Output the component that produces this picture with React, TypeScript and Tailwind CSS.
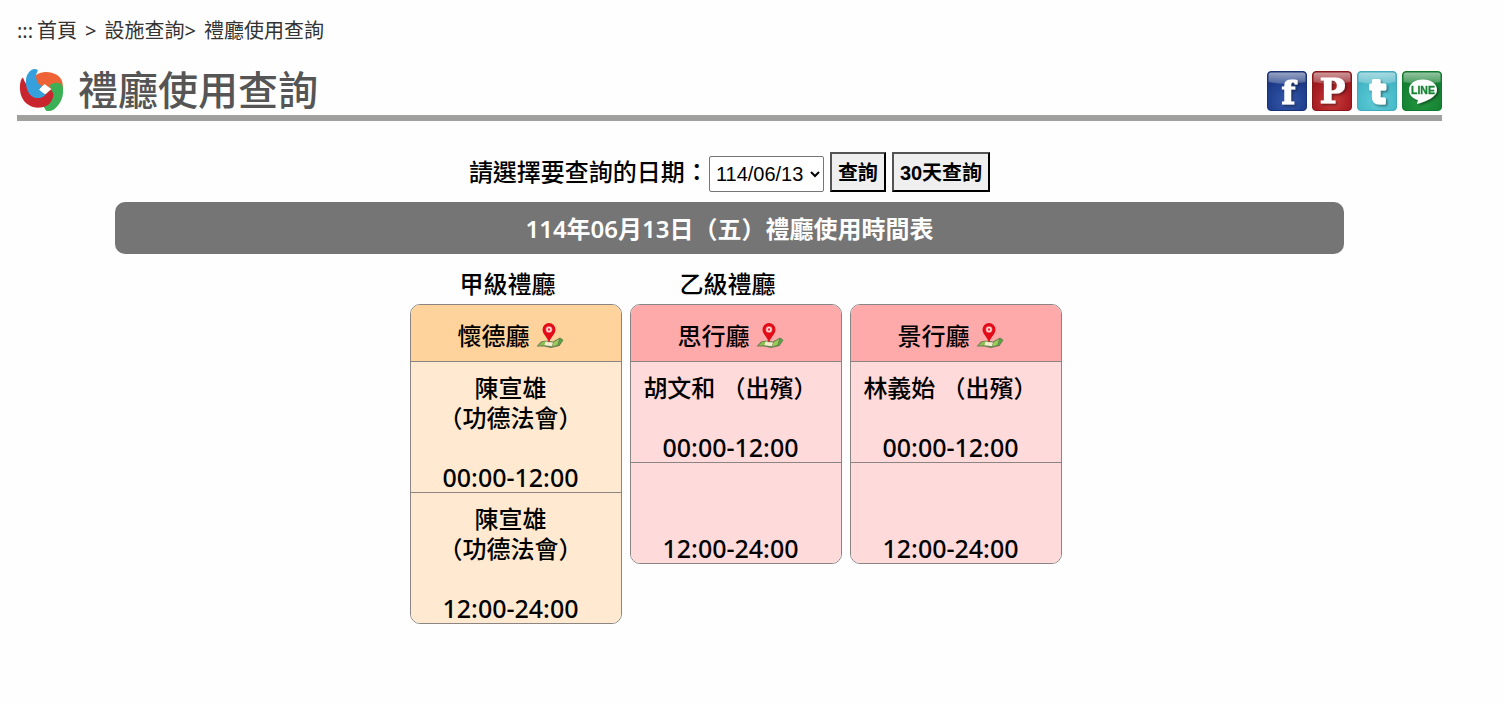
import React from "react";

type Slot = { lines: string[]; time: string };
type Hall = { grade: string; name: string; tone: "amber" | "rose"; slots: Slot[] };

const halls: Hall[] = [
  {
    grade: "甲級禮廳",
    name: "懷德廳",
    tone: "amber",
    slots: [
      { lines: ["陳宣雄", "（功德法會）"], time: "00:00-12:00" },
      { lines: ["陳宣雄", "（功德法會）"], time: "12:00-24:00" },
    ],
  },
  {
    grade: "乙級禮廳",
    name: "思行廳",
    tone: "rose",
    slots: [
      { lines: ["胡文和 （出殯）"], time: "00:00-12:00" },
      { lines: [""], time: "12:00-24:00" },
    ],
  },
  {
    grade: "",
    name: "景行廳",
    tone: "rose",
    slots: [
      { lines: ["林義始 （出殯）"], time: "00:00-12:00" },
      { lines: [""], time: "12:00-24:00" },
    ],
  },
];

const tones = {
  amber: { head: "bg-[#ffd39b]", body: "bg-[#ffead1]" },
  rose: { head: "bg-[#ffaaaa]", body: "bg-[#ffdada]" },
};

function Logo() {
  return (
    <svg viewBox="26 20 136 132" className="h-11 w-[45px] shrink-0" aria-hidden="true">
      <path d="M76 42C90 28 122 28 140 40C154 49 160 62 158 82L124 84L102 70L86 84C78 70 74 56 76 42Z" fill="#ee6236" />
      <path d="M118 72C132 60 152 62 158 74C162 100 156 118 144 132C136 144 124 152 108 149L100 136L110 116L106 98L124 84Z" fill="#3cb054" />
      <path d="M38 48C28 54 26 84 33 104C42 128 66 142 92 139C114 136 129 122 130 98L123 84L106 99L84 92C64 90 48 76 38 48Z" fill="#c9252f" />
      <path d="M82 25C66 16 48 34 47 58C46 84 58 106 76 110C88 112 100 108 106 100L87 85L95 75C82 68 76 54 78 40C79 34 84 30 82 25Z" fill="#35a0dc" />
      <path d="M103 68L123 83L106 99L88 85Z" fill="#fefefe" />
    </svg>
  );
}

function MapPin() {
  return (
    <svg viewBox="0 0 28 28" className="size-7" aria-hidden="true">
      <path d="M0.500 24.500L5 19.500L11 18.500L17 19.500L24 15.500L27.500 18L23.500 24L15 26L8 24.500Z" fill="#6b7d52" />
      <path d="M2.500 23.700L5.700 20.200L11 19.200L10 23.300L7 23.300Z" fill="#8cc152" />
      <path d="M9.500 19.600L17 20.500L16 24.300L8.500 23.300Z" fill="#f2efcf" />
      <path d="M17.500 20.500L23 17L21.500 22.800L16.500 24.500Z" fill="#9ccc55" />
      <path d="M24 16.600L26.600 18.200L23 23L22 23Z" fill="#55a545" />
      <path d="M13 21C12 15.500 6.500 12.500 6.500 7.500A6.500 6.500 0 0 1 19.500 7.500C19.500 12.500 14 15.500 13 21Z" fill="#e30b17" />
      <circle cx="13" cy="7.500" r="3.300" fill="#f58d8d" />
      <circle cx="13" cy="7.500" r="2.500" fill="#ffe3df" />
      <circle cx="13" cy="7.500" r="1.200" fill="#e3303a" />
    </svg>
  );
}

function Tile({ id, light, mid, dark, children }: { id: string; light: string; mid: string; dark: string; children: React.ReactNode }) {
  return (
    <svg viewBox="0 0 40 40" className="size-10" aria-hidden="true">
      <defs>
        <radialGradient id={id} cx="0.5" cy="0.75" r="0.8">
          <stop offset="0" stopColor={light} />
          <stop offset="0.6" stopColor={mid} />
          <stop offset="1" stopColor={dark} />
        </radialGradient>
        <linearGradient id={id + "-gloss"} x1="0" y1="0" x2="0" y2="1">
          <stop offset="0" stopColor="#fff" stopOpacity="0.55" />
          <stop offset="1" stopColor="#fff" stopOpacity="0.2" />
        </linearGradient>
        <filter id={id + "-shadow"} x="-30%" y="-30%" width="160%" height="160%">
          <feDropShadow dx="1.500" dy="1.500" stdDeviation="1.200" floodColor="#000" floodOpacity="0.45" />
        </filter>
      </defs>
      <rect x="0.500" y="0.500" width="39" height="39" rx="3.500" fill={"url(#" + id + ")"} stroke={dark} />
      <path d="M1.500 11V4Q1.500 1.500 4 1.500H36Q38.500 1.500 38.500 4V11Q20 15 1.500 11Z" fill={"url(#" + id + "-gloss)"} />
      <g filter={"url(#" + id + "-shadow)"}>{children}</g>
    </svg>
  );
}

function SocialLinks() {
  return (
    <div className="flex gap-[5px] pb-1">
      <a href="#facebook" aria-label="Facebook">
        <Tile id="fb" light="#3657a8" mid="#20408f" dark="#183274">
          <text x="21.500" y="33" textAnchor="middle" fontFamily="DejaVu Serif" fontWeight="700" fontSize="32" fill="#fff" stroke="#fff" strokeWidth="1.200">f</text>
        </Tile>
      </a>
      <a href="#plurk" aria-label="Plurk">
        <Tile id="plurk" light="#cc3b3b" mid="#a71d22" dark="#8a161b">
          <text x="20.500" y="32" textAnchor="middle" fontFamily="DejaVu Serif" fontWeight="700" fontSize="34" fill="#fff" stroke="#fff" strokeWidth="1.200">P</text>
        </Tile>
      </a>
      <a href="#twitter" aria-label="Twitter">
        <Tile id="tw" light="#62ccd8" mid="#48bac9" dark="#3fabbc">
          <text x="21" y="32" textAnchor="middle" fontFamily="DejaVu Sans" fontWeight="700" fontSize="32" fill="#fff" stroke="#fff" strokeWidth="3" strokeLinejoin="round">t</text>
        </Tile>
      </a>
      <a href="#line" aria-label="LINE">
        <Tile id="line" light="#25983f" mid="#168334" dark="#0f7a2d">
          <path d="M21 8.500C12.500 8.500 7 13 7 19C7 24.500 11.500 28 16 29L15 33C24 30.500 35 26 35 19C35 13 29 8.500 21 8.500Z" fill="#fff" />
          <text x="21" y="23.300" textAnchor="middle" fontFamily="Liberation Sans" fontWeight="700" fontSize="10.500" fill="#168334" stroke="#168334" strokeWidth="0.300">LINE</text>
        </Tile>
      </a>
    </div>
  );
}

function HallCard({ hall }: { hall: Hall }) {
  const tone = tones[hall.tone];
  return (
    <section className="w-[212px] text-center">
      <h3 className="h-[38px] pr-4 leading-9">{hall.grade}</h3>
      <div className="overflow-hidden rounded-[10px] border border-[#8a8583]">
        <div className={"flex h-14 items-center justify-center gap-1.5 pt-1.5 pr-2.5 " + tone.head}>
          <h4>{hall.name}</h4>
          <a href="#map" aria-label={hall.name}>
            <MapPin />
          </a>
        </div>
        <ul>
          {hall.slots.map((slot) => (
            <li key={slot.time} className={"border-t border-[#8a8583] pt-[11px] pr-2.5 leading-[30px] " + tone.body}>
              {slot.lines.map((line, i) => (
                <p key={i} className="min-h-[30px] whitespace-nowrap">{line}</p>
              ))}
              <p className="mt-[29px] text-[25px] leading-[30px]">{slot.time}</p>
            </li>
          ))}
        </ul>
      </div>
    </section>
  );
}

export default function App() {
  return (
    <div className="min-h-screen bg-[#fefefe] pr-[62px] pl-[17px] font-['Noto_Sans','Noto_Sans_CJK_TC',sans-serif] text-2xl font-medium text-black">
      <nav className="flex h-[60px] items-center pt-0.5 text-xl font-normal text-[#333]">
        <span className="mr-1">:::</span>
        <a href="#home">首頁</a>
        <span className="mx-2 text-xl">&gt;</span>
        <a href="#facilities">設施查詢</a>
        <span className="mr-2 text-xl">&gt;</span>
        <a href="#halls">禮廳使用查詢</a>
      </nav>
      <header className="flex h-[61px] items-end justify-between border-b-6 border-[#a0a09f]">
        <div className="flex h-full items-center gap-3.5 pt-1 pl-0.5">
          <Logo />
          <h1 className="text-[40px] leading-none text-[#555]">禮廳使用查詢</h1>
        </div>
        <SocialLinks />
      </header>
      <main>
        <form className="flex items-end justify-center pt-[31px]" onSubmit={(e) => e.preventDefault()}>
          <label htmlFor="date" className="leading-10">請選擇要查詢的日期：</label>
          <select
            id="date"
            className="mr-1.5 h-9 w-[115px] rounded-xs border border-[#767676] bg-white px-0.5 font-['Liberation_Sans',sans-serif] text-xl font-normal"
          >
            <option>114/06/13</option>
          </select>
          <button type="submit" className="mr-1.5 h-10 border-2 border-black bg-[#efefef] px-1.5 pt-0.5 font-['Liberation_Sans','Noto_Sans_CJK_TC',sans-serif] text-xl font-bold [border-style:outset]">
            查詢
          </button>
          <button type="button" className="h-10 border-2 border-black bg-[#efefef] px-1.5 pt-0.5 font-['Liberation_Sans','Noto_Sans_CJK_TC',sans-serif] text-xl font-bold [border-style:outset]">
            30天查詢
          </button>
        </form>
        <h2 className="mx-[98px] mt-2.5 h-[52px] rounded-[10px] bg-[#757575] pt-0.5 text-center leading-[50px] font-semibold text-white">
          114年06月13日（五）禮廳使用時間表
        </h2>
        <div className="flex items-start justify-center gap-2 pt-3 pl-3">
          {halls.map((hall) => (
            <HallCard key={hall.name} hall={hall} />
          ))}
        </div>
      </main>
    </div>
  );
}
